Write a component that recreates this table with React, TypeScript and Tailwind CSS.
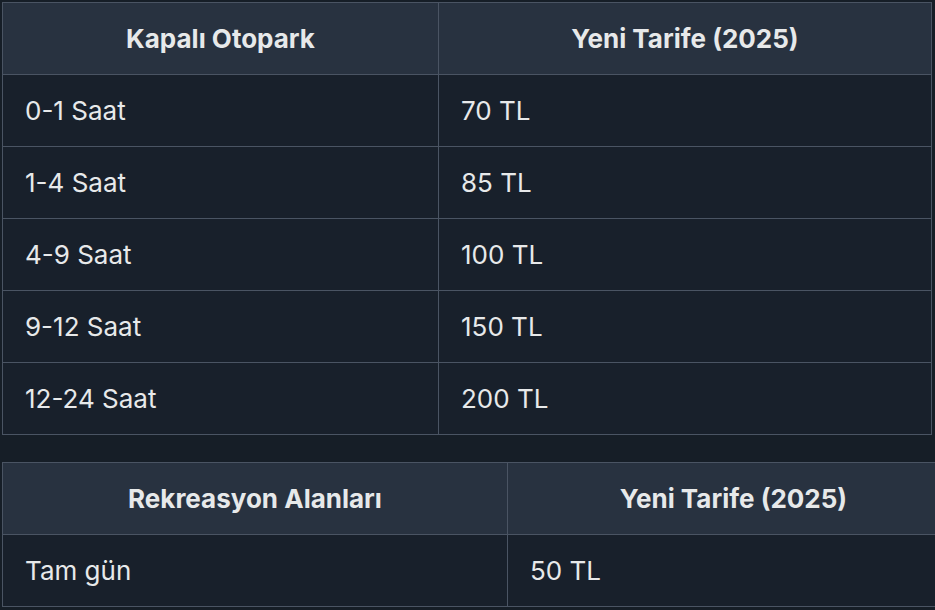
import React from 'react';

const parkRows = [
  ['0-1 Saat', '70 TL'],
  ['1-4 Saat', '85 TL'],
  ['4-9 Saat', '100 TL'],
  ['9-12 Saat', '150 TL'],
  ['12-24 Saat', '200 TL'],
];

const recRows = [['Tam gün', '50 TL']];

const TariffTable = ({ title, rows, firstCol, width }: { title: string; rows: string[][]; firstCol: string; width: string }) => {
  return (
    <table className={`${width} shrink-0 border-collapse table-fixed text-[26px] leading-[32px] text-[#e7e9ea]`}>
      <colgroup>
        <col className={firstCol} />
        <col />
      </colgroup>
      <thead>
        <tr className="bg-[#283240] h-[72px]">
          <th className="border border-[#4a5463] font-bold text-center">{title}</th>
          <th className="border border-[#4a5463] font-bold text-center">Yeni Tarife (2025)</th>
        </tr>
      </thead>
      <tbody>
        {rows.map((r) => (
          <tr key={r[0]} className="bg-[#18202b] h-[72px]">
            <td className="border border-[#4a5463] px-[22px]">{r[0]}</td>
            <td className="border border-[#4a5463] px-[22px]">{r[1]}</td>
          </tr>
        ))}
      </tbody>
    </table>
  );
};

export default function App() {
  return (
    <div className="w-[935px] h-[610px] bg-[#161e27] pt-[2px] pl-[2px] flex flex-col items-start gap-[27px] overflow-hidden" style={{ fontFamily: 'Inter, "Noto Sans", sans-serif' }}>
      <TariffTable title="Kapalı Otopark" rows={parkRows} firstCol="w-[436px]" width="w-[930px]" />
      <TariffTable title="Rekreasyon Alanları" rows={recRows} firstCol="w-[505px]" width="w-[958px]" />
    </div>
  );
}
